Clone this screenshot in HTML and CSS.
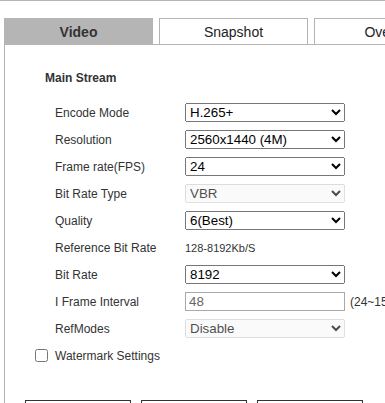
FILE: index.html
```html
<!DOCTYPE html>
<html lang="en">
<head>
  <meta charset="UTF-8" />
  <meta name="viewport" content="width=device-width, initial-scale=1.0" />
  <title>Video Settings</title>
  <link rel="stylesheet" href="styles.css">
</head>
<body>
  <div class="topline"></div>
  <div class="settings">
    <div class="tabs">
      <div class="tab active">Video</div>
      <div class="tab">Snapshot</div>
      <div class="tab">Overlay</div>
      <div class="tab">ROI</div>
    </div>

    <div class="panel">
      <div class="section-title">Main Stream</div>

      <div class="form">
        <div class="row">
          <label>Encode Mode</label>
          <select><option>H.265+</option><option>H.265</option><option>H.264+</option><option>H.264</option></select>
        </div>
        <div class="row">
          <label>Resolution</label>
          <select><option>2560x1440 (4M)</option><option>1920x1080 (1080P)</option></select>
        </div>
        <div class="row">
          <label>Frame rate(FPS)</label>
          <select><option>24</option><option>25</option><option>30</option></select>
        </div>
        <div class="row">
          <label>Bit Rate Type</label>
          <select disabled><option>VBR</option></select>
        </div>
        <div class="row">
          <label>Quality</label>
          <select><option>6(Best)</option><option>5(Better)</option></select>
        </div>
        <div class="row">
          <label>Reference Bit Rate</label>
          <span class="value">128-8192Kb/S</span>
        </div>
        <div class="row">
          <label>Bit Rate</label>
          <select><option>8192</option><option>4096</option></select>
        </div>
        <div class="row">
          <label>I Frame Interval</label>
          <input type="text" value="48">
          <span class="hint">(24~150)</span>
        </div>
        <div class="row">
          <label>RefModes</label>
          <select disabled><option>Disable</option></select>
        </div>
      </div>

      <label class="check"><input type="checkbox"> Watermark Settings</label>

      <div class="actions">
        <button>Default</button>
        <button>Refresh</button>
        <button>Save</button>
      </div>
    </div>
  </div>
</body>
</html>
```

FILE: styles.css
```css
body {
  margin: 0;
  font-family: "Liberation Sans", Arial, sans-serif;
  color: #333;
  background: #fff;
  overflow: hidden;
}

.topline {
  border-top: 1px solid #b4b4b4;
}

.settings {
  margin: 17px 0 0 4px;
  width: 720px;
}

.tabs {
  display: flex;
  gap: 6px;
  height: 26px;
  border-bottom: 1px solid #b4b4b4;
}

.tab {
  box-sizing: border-box;
  width: 149px;
  height: 26px;
  flex-shrink: 0;
  border: 1px solid #b4b4b4;
  border-bottom: none;
  background: #fff;
  display: flex;
  align-items: center;
  justify-content: center;
  font-size: 14px;
  color: #222;
}

.tab.active {
  height: 27px;
  background: #b5b5b5;
  border-color: #b5b5b5;
  font-weight: bold;
  color: #333;
}

.panel {
  border-left: 1px solid #b4b4b4;
  padding-top: 26px;
}

.section-title {
  margin-left: 40px;
  font-size: 12px;
  line-height: 14px;
  font-weight: bold;
}

.form {
  margin-top: 14px;
}

.row {
  display: flex;
  align-items: center;
  height: 27px;
  padding-left: 50px;
  font-size: 12px;
}

.row label {
  width: 130px;
  flex-shrink: 0;
}

.row select,
.row input {
  box-sizing: border-box;
  width: 160px;
  height: 19px;
  margin: 0;
  font-family: "Liberation Sans", Arial, sans-serif;
  font-size: 13.33px;
}

.row select {
  color: #000;
}

.row input {
  padding: 1px 3px;
  border: 1px solid #a9a9a9;
  color: #666;
}

.value {
  font-size: 11px;
}

.hint {
  margin-left: 5px;
}

.check {
  display: flex;
  align-items: center;
  height: 27px;
  padding-left: 30px;
  font-size: 12px;
}

.check input {
  margin: 0 7px 0 0;
  width: 13px;
  height: 13px;
}

.actions {
  display: flex;
  gap: 10px;
  margin-top: 31px;
  padding-left: 20px;
}

.actions button {
  width: 106px;
  height: 28px;
  border: 1px solid #333;
  background: #fff;
  font-family: "Liberation Sans", Arial, sans-serif;
  font-size: 12px;
}
```
